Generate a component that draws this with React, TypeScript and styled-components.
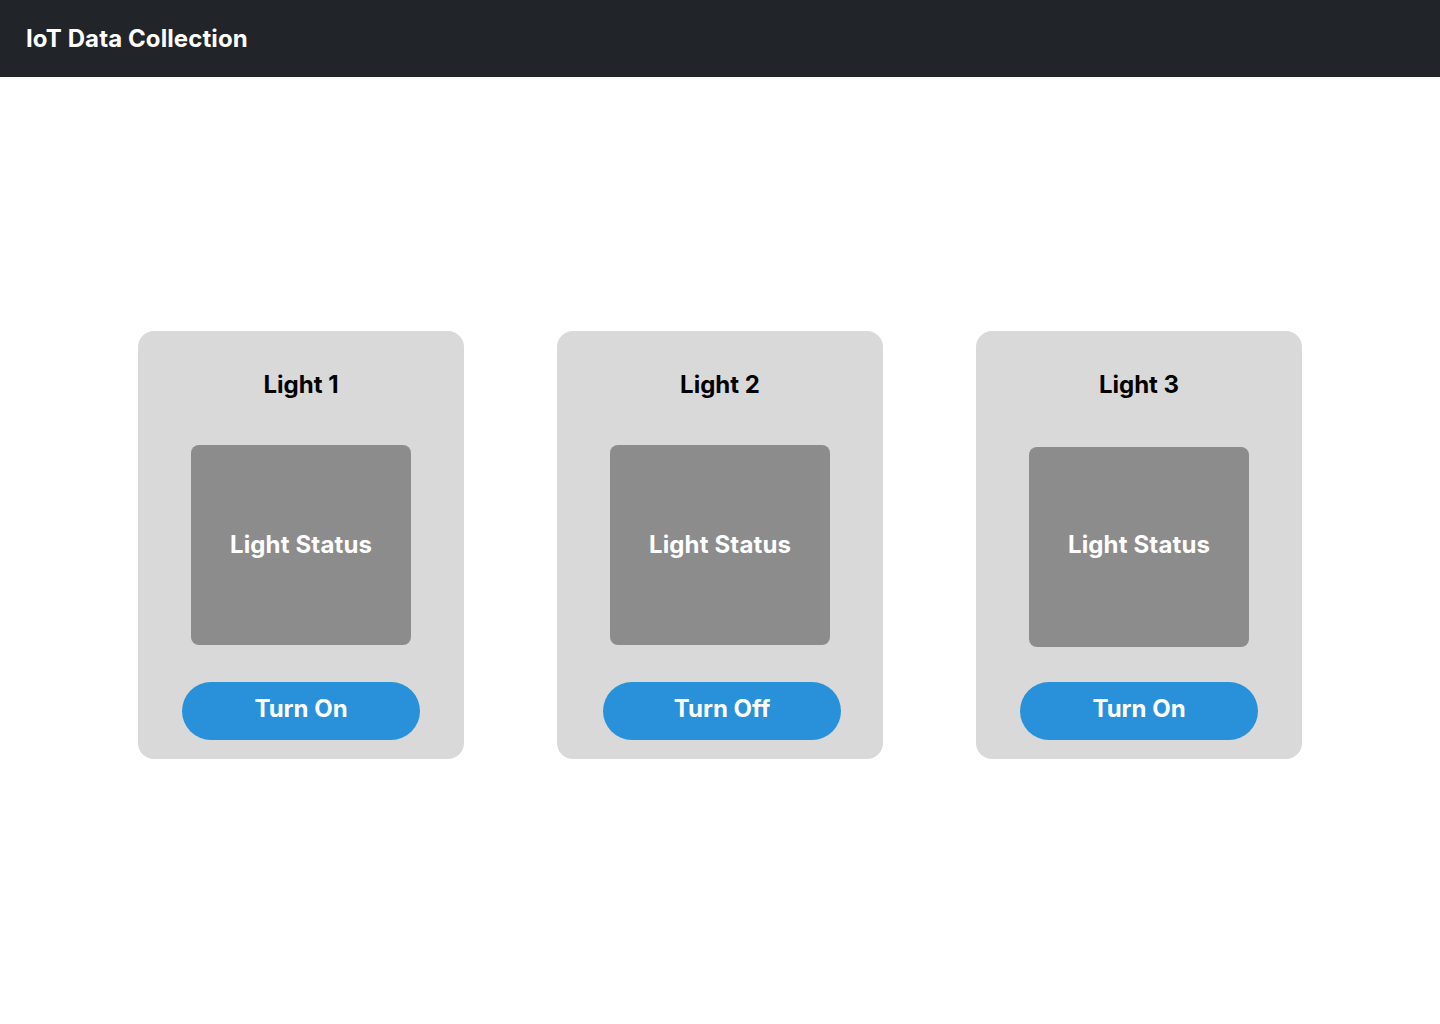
import React, { ReactElement } from 'react';
import styled, { createGlobalStyle } from 'styled-components';

const GlobalStyle = createGlobalStyle`
  body {
    margin: 0;
    background: #ffffff;
    font-family: Inter, "Noto Sans", sans-serif;
  }
`;

const Header = styled.header`
  align-items: center;
  background: #212429;
  box-sizing: border-box;
  display: flex;
  height: 77px;
  padding: 0 26px;
`;

const Title = styled.h1`
  color: #ffffff;
  font-size: 24px;
  font-weight: 700;
  letter-spacing: 0.1px;
  margin: 0;
`;

const Main = styled.main`
  display: flex;
  flex-direction: row;
  gap: 93px;
  justify-content: center;
  padding-top: 254px;
`;

const Card = styled.section`
  align-items: center;
  background: #d9d9d9;
  border-radius: 16px;
  box-sizing: border-box;
  display: flex;
  flex-direction: column;
  height: 428px;
  padding: 39px 0 19px;
  width: 326px;
`;

const CardTitle = styled.h2`
  color: #000000;
  font-size: 24px;
  font-weight: 700;
  line-height: 29px;
  margin: 0;
`;

const StatusBox = styled.div<{ $shift?: number }>`
  align-items: center;
  background: #8c8c8c;
  border-radius: 8px;
  box-sizing: border-box;
  color: #ffffff;
  display: flex;
  font-size: 24px;
  font-weight: 700;
  height: 200px;
  justify-content: center;
  letter-spacing: 0.15px;
  margin-top: ${(p) => 46 + (p.$shift ?? 0)}px;
  margin-bottom: ${(p) => 37 - (p.$shift ?? 0)}px;
  padding-bottom: ${(p) => 2 + (p.$shift ?? 0) * 2}px;
  width: 220px;
`;

const Button = styled.button<{ $nudge?: number }>`
  background: #2891d9;
  border: none;
  border-radius: 29px;
  box-sizing: border-box;
  color: #ffffff;
  cursor: pointer;
  font-family: inherit;
  font-size: 24px;
  font-weight: 700;
  height: 58px;
  margin-left: ${(p) => (p.$nudge ?? 0) * 2}px;
  padding: 0 0 5px;
  width: 238px;
`;

interface Light {
  name: string;
  on: boolean;
  shift?: number;
  nudge?: number;
}

const lights: Light[] = [
  { name: 'Light 1', on: false },
  { name: 'Light 2', on: true, nudge: 2 },
  { name: 'Light 3', on: false, shift: 2 },
];

export default function App(): ReactElement {
  return (
    <>
      <GlobalStyle />
      <Header>
        <Title>IoT Data Collection</Title>
      </Header>
      <Main>
        {lights.map(
          (light: Light): ReactElement => (
            <Card key={light.name}>
              <CardTitle>{light.name}</CardTitle>
              <StatusBox $shift={light.shift}>Light Status</StatusBox>
              <Button $nudge={light.nudge}>
                {light.on ? 'Turn Off' : 'Turn On'}
              </Button>
            </Card>
          ),
        )}
      </Main>
    </>
  );
}
